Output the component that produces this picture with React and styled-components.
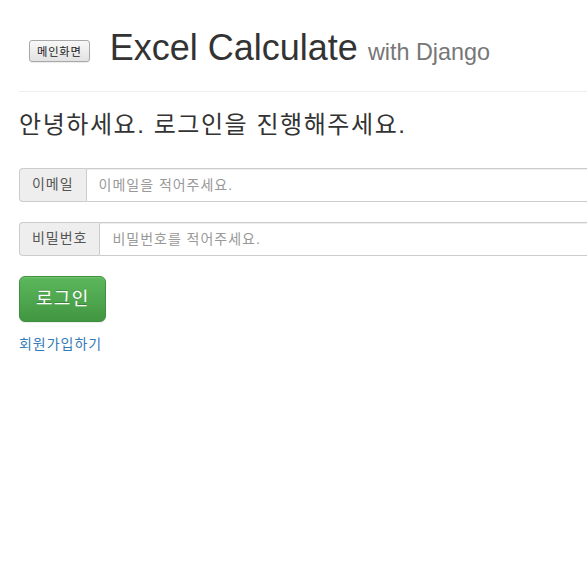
import styled, { createGlobalStyle } from "styled-components";

const GlobalStyle = createGlobalStyle`
  html, body {
    margin: 0;
    padding: 0;
    overflow: hidden;
    background: #fff;
  }
  body {
    font-family: "Liberation Sans", "Noto Sans CJK KR", sans-serif;
    font-size: 14px;
    line-height: 1.42857;
    color: #333;
  }
`;

const Container = styled.div`
  width: 720px;
  padding-left: 19px;
`;

const PageHeader = styled.header`
  display: flex;
  align-items: flex-start;
  margin-top: 28px;
  padding: 0 0 23px 10px;
  border-bottom: 1px solid #eee;
`;

// korean glyphs in the reference are a bit wider than Noto's
const Hangul = `letter-spacing: 0.07em;`;

const HomeButton = styled.button`
  margin-top: 12px;
  height: 22px;
  padding: 0 7px;
  font-family: "Noto Sans CJK KR", sans-serif;
  font-size: 11.3px;
  ${Hangul}
  color: #222;
  background: linear-gradient(to bottom, #f8f8f8 0%, #e2e2e2 100%);
  border: 1px solid #a8a8a8;
  border-radius: 3px;
  box-shadow: 0 1px 1px rgba(0, 0, 0, 0.08);
  cursor: pointer;
`;

const Title = styled.h1`
  margin: 0 0 0 20px;
  font-size: 36px;
  font-weight: 400;
  line-height: 40px;
  color: #333;

  small {
    font-size: 65%;
    line-height: 1;
    color: #777;
  }
`;

const Greeting = styled.h3`
  margin: 20px 0 30px;
  font-size: 24px;
  font-weight: 400;
  line-height: 26.4px;
  letter-spacing: 0.065em;
  color: #333;
`;

const Form = styled.form`
  display: flex;
  flex-direction: column;
  align-items: flex-start;
`;

const InputGroup = styled.div`
  display: flex;
  width: 100%;
  height: 34px;
  margin-bottom: 20px;
  box-sizing: border-box;
`;

const Addon = styled.span`
  display: flex;
  align-items: center;
  padding: 0 12px;
  font-size: 14px;
  ${Hangul}
  color: #555;
  background: #eee;
  border: 1px solid #ccc;
  border-right: 0;
  border-radius: 4px 0 0 4px;
  white-space: nowrap;
`;

const Input = styled.input`
  flex: 1;
  height: 34px;
  box-sizing: border-box;
  padding: 6px 12px;
  font-family: inherit;
  font-size: 14px;
  ${Hangul}
  color: #555;
  border: 1px solid #ccc;
  border-radius: 0 4px 4px 0;
  box-shadow: inset 0 1px 1px rgba(0, 0, 0, 0.075);
  outline: none;

  &::placeholder {
    color: #999;
  }
`;

const SubmitButton = styled.button`
  height: 46px;
  padding: 10px 16px;
  font-family: inherit;
  font-size: 18px;
  line-height: 24px;
  ${Hangul}
  color: #fff;
  background-image: linear-gradient(to bottom, #5cb85c 0%, #419641 100%);
  border: 1px solid #3e8f3e;
  border-radius: 6px;
  text-shadow: 0 -1px 0 rgba(0, 0, 0, 0.2);
  box-shadow: inset 0 1px 0 rgba(255, 255, 255, 0.15),
    0 1px 1px rgba(0, 0, 0, 0.075);
  cursor: pointer;
`;

const SignupLink = styled.a`
  display: block;
  margin-top: 12px;
  font-size: 14px;
  line-height: 20px;
  ${Hangul}
  color: #337ab7;
  text-decoration: none;
`;

const App = () => {
  return (
    <Container>
      <GlobalStyle />
      <PageHeader>
        <HomeButton type="button">메인화면</HomeButton>
        <Title>
          Excel Calculate <small>with Django</small>
        </Title>
      </PageHeader>

      <Greeting>안녕하세요. 로그인을 진행해주세요.</Greeting>

      <Form onSubmit={(e) => e.preventDefault()}>
        <InputGroup>
          <Addon>이메일</Addon>
          <Input type="email" placeholder="이메일을 적어주세요." />
        </InputGroup>
        <InputGroup>
          <Addon>비밀번호</Addon>
          <Input type="password" placeholder="비밀번호를 적어주세요." />
        </InputGroup>
        <SubmitButton type="submit">로그인</SubmitButton>
      </Form>

      <SignupLink href="#">회원가입하기</SignupLink>
    </Container>
  );
};

export default App;
